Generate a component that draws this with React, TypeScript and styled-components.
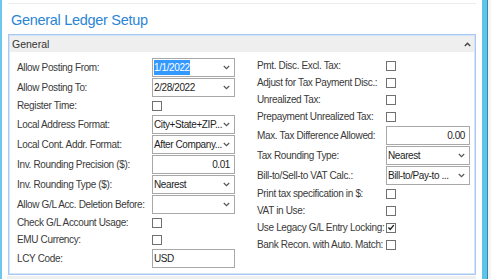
import React from 'react'
import styled, { createGlobalStyle } from 'styled-components'

const GlobalStyle = createGlobalStyle`
  html, body {
    margin: 0;
    padding: 0;
    width: 491px;
    height: 279px;
    overflow: hidden;
    background: #ffffff;
    font-family: "Liberation Sans", Arial, sans-serif;
  }
`

type Row =
  | { kind: 'select'; label: string; value: string; selected?: boolean }
  | { kind: 'text'; label: string; value: string; right?: boolean }
  | { kind: 'check'; label: string; checked?: boolean }

const leftRows: Row[] = [
  { kind: 'select', label: 'Allow Posting From:', value: '1/1/2022', selected: true },
  { kind: 'select', label: 'Allow Posting To:', value: '2/28/2022' },
  { kind: 'check', label: 'Register Time:' },
  { kind: 'select', label: 'Local Address Format:', value: 'City+State+ZIP...' },
  { kind: 'select', label: 'Local Cont. Addr. Format:', value: 'After Company...' },
  { kind: 'text', label: 'Inv. Rounding Precision ($):', value: '0.01', right: true },
  { kind: 'select', label: 'Inv. Rounding Type ($):', value: 'Nearest' },
  { kind: 'select', label: 'Allow G/L Acc. Deletion Before:', value: '' },
  { kind: 'check', label: 'Check G/L Account Usage:' },
  { kind: 'check', label: 'EMU Currency:' },
  { kind: 'text', label: 'LCY Code:', value: 'USD' },
]

const rightRows: Row[] = [
  { kind: 'check', label: 'Pmt. Disc. Excl. Tax:' },
  { kind: 'check', label: 'Adjust for Tax Payment Disc.:' },
  { kind: 'check', label: 'Unrealized Tax:' },
  { kind: 'check', label: 'Prepayment Unrealized Tax:' },
  { kind: 'text', label: 'Max. Tax Difference Allowed:', value: '0.00', right: true },
  { kind: 'select', label: 'Tax Rounding Type:', value: 'Nearest' },
  { kind: 'select', label: 'Bill-to/Sell-to VAT Calc.:', value: 'Bill-to/Pay-to ...' },
  { kind: 'check', label: 'Print tax specification in $:' },
  { kind: 'check', label: 'VAT in Use:' },
  { kind: 'check', label: 'Use Legacy G/L Entry Locking:', checked: true },
  { kind: 'check', label: 'Bank Recon. with Auto. Match:' },
]

const Chevron = () => (
  <svg width="7" height="5" viewBox="0 0 7 5">
    <path d="M0.8 1 L3.5 3.6 L6.2 1" fill="none" stroke="#555" strokeWidth="1.2" />
  </svg>
)

const Column = ({ rows, labelWidth, controlWidth }: { rows: Row[]; labelWidth: number; controlWidth: number }) => (
  <ColumnWrap>
    {rows.map((row, i) => (
      <FieldRow key={i} $h={row.kind === 'check' ? 17 : 20}>
        <Label $w={labelWidth}>{row.label}</Label>
        {row.kind === 'check' && (
          <CheckBox>
            {row.checked && (
              <svg width="9" height="9" viewBox="0 0 9 9">
                <path d="M1.6 4.6 L3.6 6.6 L7.6 1.8" fill="none" stroke="#222" strokeWidth="1.6" />
              </svg>
            )}
          </CheckBox>
        )}
        {row.kind === 'text' && (
          <InputBox $w={controlWidth} $right={row.right}>
            {row.value}
          </InputBox>
        )}
        {row.kind === 'select' && (
          <InputBox $w={controlWidth}>
            <span>{row.selected ? <Selected>{row.value}</Selected> : row.value}</span>
            <Chevron />
          </InputBox>
        )}
      </FieldRow>
    ))}
  </ColumnWrap>
)

export default function App() {
  return (
    <>
      <GlobalStyle />
      <Frame>
        <LeftEdge />
        <Main>
          <TopRule />
          <Title>General Ledger Setup</Title>
          <Panel>
            <PanelHeader>
              <span>General</span>
              <svg width="7" height="5" viewBox="0 0 7 5">
                <path d="M0.8 4 L3.5 1.2 L6.2 4" fill="none" stroke="#444" strokeWidth="1.4" />
              </svg>
            </PanelHeader>
            <PanelBody>
              <Column rows={leftRows} labelWidth={135} controlWidth={83} />
              <Column rows={rightRows} labelWidth={129} controlWidth={84} />
            </PanelBody>
          </Panel>
          <NextPanel />
        </Main>
        <RightRail>
          <RailGap />
          <RailBlue />
          <RailDark />
          <RailTail />
        </RightRail>
      </Frame>
    </>
  )
}

const Frame = styled.div`
  display: flex;
  width: 491px;
  height: 279px;
`

const LeftEdge = styled.div`
  width: 2px;
  background: #6cc6ee;
`

const Main = styled.div`
  flex: 1;
  display: flex;
  flex-direction: column;
  padding-left: 6px;
  min-width: 0;
`

const TopRule = styled.div`
  height: 3px;
  border-bottom: 1px solid #ececec;
`

const Title = styled.div`
  margin: 7px 0 0 3px;
  height: 23px;
  font-size: 14.5px;
  line-height: 18px;
  letter-spacing: -0.3px;
  color: #2b85d5;
`

const Panel = styled.div`
  width: 466px;
  height: 239px;
  border: 1px solid #a9c9f4;
  box-shadow: inset 0 0 0 1px #d3e3fa;
  display: flex;
  flex-direction: column;
`

const PanelHeader = styled.div`
  height: 16px;
  margin: 1px 1px 0 1px;
  background: #efefef;
  display: flex;
  align-items: center;
  justify-content: space-between;
  padding: 0 3px 0 2px;
  font-size: 10.5px;
  color: #333;

  svg {
    margin-top: 1px;
  }
`

const PanelBody = styled.div`
  display: flex;
  gap: 22px;
  padding: 5px 0 0 8px;
`

const ColumnWrap = styled.div`
  display: flex;
  flex-direction: column;
`

const FieldRow = styled.div<{ $h: number }>`
  display: flex;
  align-items: center;
  height: ${(p) => p.$h}px;
`

const Label = styled.div<{ $w: number }>`
  width: ${(p) => p.$w}px;
  flex-shrink: 0;
  font-size: 10px;
  letter-spacing: -0.35px;
  color: #3a3a3a;
  white-space: nowrap;
`

const InputBox = styled.div<{ $w: number; $right?: boolean }>`
  box-sizing: border-box;
  width: ${(p) => p.$w}px;
  height: 19px;
  border: 1px solid #a8a8a8;
  background: #fff;
  display: flex;
  align-items: center;
  justify-content: ${(p) => (p.$right ? 'flex-end' : 'space-between')};
  padding: 0 4px 0 1px;
  font-size: 10px;
  letter-spacing: -0.4px;
  color: #1e1e1e;
  white-space: nowrap;

  svg {
    flex-shrink: 0;
  }
`

const Selected = styled.span`
  background: #3399ff;
  color: #fff;
  padding: 2px 0;
`

const CheckBox = styled.div`
  box-sizing: border-box;
  width: 10px;
  height: 10px;
  border: 1px solid #707070;
  background: #fff;
  display: flex;
  align-items: center;
  justify-content: center;
`

const NextPanel = styled.div`
  margin-top: 1px;
  margin-left: -1px;
  width: 470px;
  flex: 1;
  background: #efefef;
`

const RightRail = styled.div`
  display: flex;
  width: 15px;
`

const RailGap = styled.div`
  width: 6px;
  background: #fff;
`

const RailBlue = styled.div`
  width: 5px;
  background: #5ec5ea;
`

const RailDark = styled.div`
  width: 1px;
  background: #3c86a8;
`

const RailTail = styled.div`
  flex: 1;
  background: #f4f4f4;
`
